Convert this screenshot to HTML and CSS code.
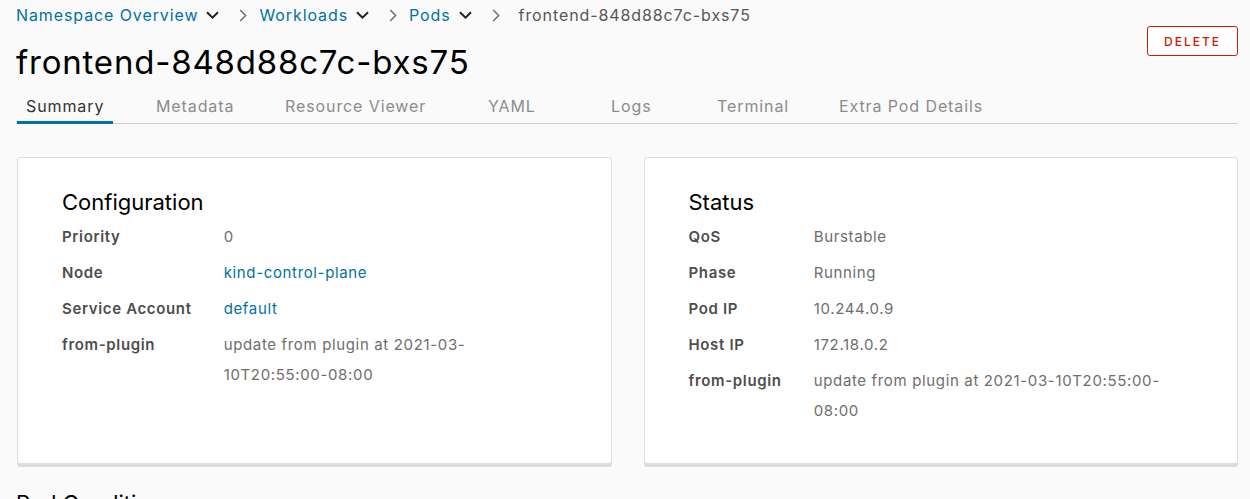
FILE: index.html
```html
<!DOCTYPE html>
<html lang="en">
<head>
<meta charset="utf-8">
<title>frontend-848d88c7c-bxs75</title>
<link rel="stylesheet" href="styles.css">
</head>
<body>
<div class="page">
  <header class="head">
    <div class="head-main">
      <nav class="crumbs">
        <a class="crumb-link" href="#">Namespace Overview</a>
        <svg class="caret" width="13" height="8" viewBox="0 0 13 8"><path d="M1 1.2 L6.5 6.6 L12 1.2" fill="none" stroke="#222" stroke-width="2"/></svg>
        <svg class="sep" width="8" height="13" viewBox="0 0 8 13"><path d="M1.2 1 L6.6 6.5 L1.2 12" fill="none" stroke="#737373" stroke-width="1.6"/></svg>
        <a class="crumb-link" href="#">Workloads</a>
        <svg class="caret" width="13" height="8" viewBox="0 0 13 8"><path d="M1 1.2 L6.5 6.6 L12 1.2" fill="none" stroke="#222" stroke-width="2"/></svg>
        <svg class="sep" width="8" height="13" viewBox="0 0 8 13"><path d="M1.2 1 L6.6 6.5 L1.2 12" fill="none" stroke="#737373" stroke-width="1.6"/></svg>
        <a class="crumb-link" href="#">Pods</a>
        <svg class="caret" width="13" height="8" viewBox="0 0 13 8"><path d="M1 1.2 L6.5 6.6 L12 1.2" fill="none" stroke="#222" stroke-width="2"/></svg>
        <svg class="sep" width="8" height="13" viewBox="0 0 8 13"><path d="M1.2 1 L6.6 6.5 L1.2 12" fill="none" stroke="#737373" stroke-width="1.6"/></svg>
        <span class="crumb-current">frontend-848d88c7c-bxs75</span>
      </nav>
      <h1 class="title">frontend-848d88c7c-bxs75</h1>
    </div>
    <button class="btn-delete" type="button">DELETE</button>
  </header>

  <div class="tabs">
    <div class="tab-cell"><span class="tab tab-active">Summary</span></div>
    <div class="tab-cell"><span class="tab">Metadata</span></div>
    <div class="tab-cell"><span class="tab">Resource Viewer</span></div>
    <div class="tab-cell"><span class="tab">YAML</span></div>
    <div class="tab-cell"><span class="tab">Logs</span></div>
    <div class="tab-cell"><span class="tab">Terminal</span></div>
    <div class="tab-cell"><span class="tab">Extra Pod Details</span></div>
  </div>

  <div class="cards">
    <section class="card">
      <h2 class="card-title">Configuration</h2>
      <dl class="props">
        <dt>Priority</dt><dd>0</dd>
        <dt>Node</dt><dd><a href="#">kind-control-plane</a></dd>
        <dt>Service Account</dt><dd><a href="#">default</a></dd>
        <dt>from-plugin</dt><dd>update from plugin at 2021-03-10T20:55:00-08:00</dd>
      </dl>
    </section>
    <section class="card">
      <h2 class="card-title">Status</h2>
      <dl class="props">
        <dt>QoS</dt><dd>Burstable</dd>
        <dt>Phase</dt><dd>Running</dd>
        <dt>Pod IP</dt><dd>10.244.0.9</dd>
        <dt>Host IP</dt><dd>172.18.0.2</dd>
        <dt>from-plugin</dt><dd>update from plugin at 2021-03-10T20:55:00-08:00</dd>
      </dl>
    </section>
  </div>

  <h2 class="section-title">Pod Conditions</h2>
</div>
</body>
</html>
```

FILE: styles.css
```css
html, body {
  margin: 0;
  padding: 0;
  background: #fafafa;
  font-family: Inter, "Noto Sans", sans-serif;
  color: #000;
  overflow: hidden;
}

.page {
  padding: 0 12px 0 16px;
}

.head {
  display: flex;
  align-items: center;
  justify-content: space-between;
}

.crumbs {
  display: flex;
  align-items: center;
  height: 30px;
  font-size: 16px;
  letter-spacing: 0.9px;
}

.crumb-link {
  color: #0072a3;
  text-decoration: none;
}

.caret {
  margin-left: 8px;
}

.sep {
  margin: 0 12px 0 20px;
}

.crumb-current {
  color: #565656;
  margin-left: 7px;
}

.title {
  margin: 12px 0 0;
  font-size: 33px;
  line-height: 40px;
  font-weight: 400;
  letter-spacing: 0.8px;
}

.btn-delete {
  height: 30px;
  padding: 0 16px;
  border: 1px solid #c92100;
  border-radius: 3px;
  background: #fff;
  color: #c92100;
  font-family: inherit;
  font-size: 12px;
  font-weight: 500;
  letter-spacing: 2px;
}

.tabs {
  display: grid;
  grid-template-columns: 130px 129px 203px 123px 106px 122px 1fr;
  margin: 4px 0 0 1px;
  border-bottom: 1px solid #cccccc;
}

.tab-cell {
  display: flex;
  margin-bottom: -1px;
}

.tab {
  display: block;
  padding: 5px 9px 0;
  line-height: 30px;
  font-size: 16px;
  color: #8c8c8c;
  border-bottom: 3px solid transparent;
  letter-spacing: 0.9px;
}

.tab-active {
  color: #333;
  border-bottom-color: #0072a3;
}

.cards {
  display: grid;
  grid-template-columns: 1fr 1fr;
  gap: 32px;
  margin: 33px 0 0 1px;
}

.card {
  background: #fff;
  border: 1px solid #dedede;
  border-radius: 3px;
  box-shadow: 0 3px 0 #dcdcdc;
  padding: 29px 48px 37px 44px;
}

.card-title {
  margin: 0 0 5px;
  font-size: 22px;
  line-height: 30px;
  font-weight: 400;
}

.props {
  display: grid;
  grid-template-columns: max-content 1fr;
  column-gap: 32px;
  row-gap: 6px;
  margin: 0;
  font-size: 15px;
  line-height: 30px;
  letter-spacing: 0.65px;
}

.props dt {
  font-weight: 600;
  color: #4d4d4d;
}

.props dd {
  margin: 0;
  color: #6e6e6e;
}

.props a {
  color: #0072a3;
  text-decoration: none;
}

.section-title {
  margin: 24px 0 0;
  font-size: 22px;
  line-height: 30px;
  font-weight: 400;
}
```
